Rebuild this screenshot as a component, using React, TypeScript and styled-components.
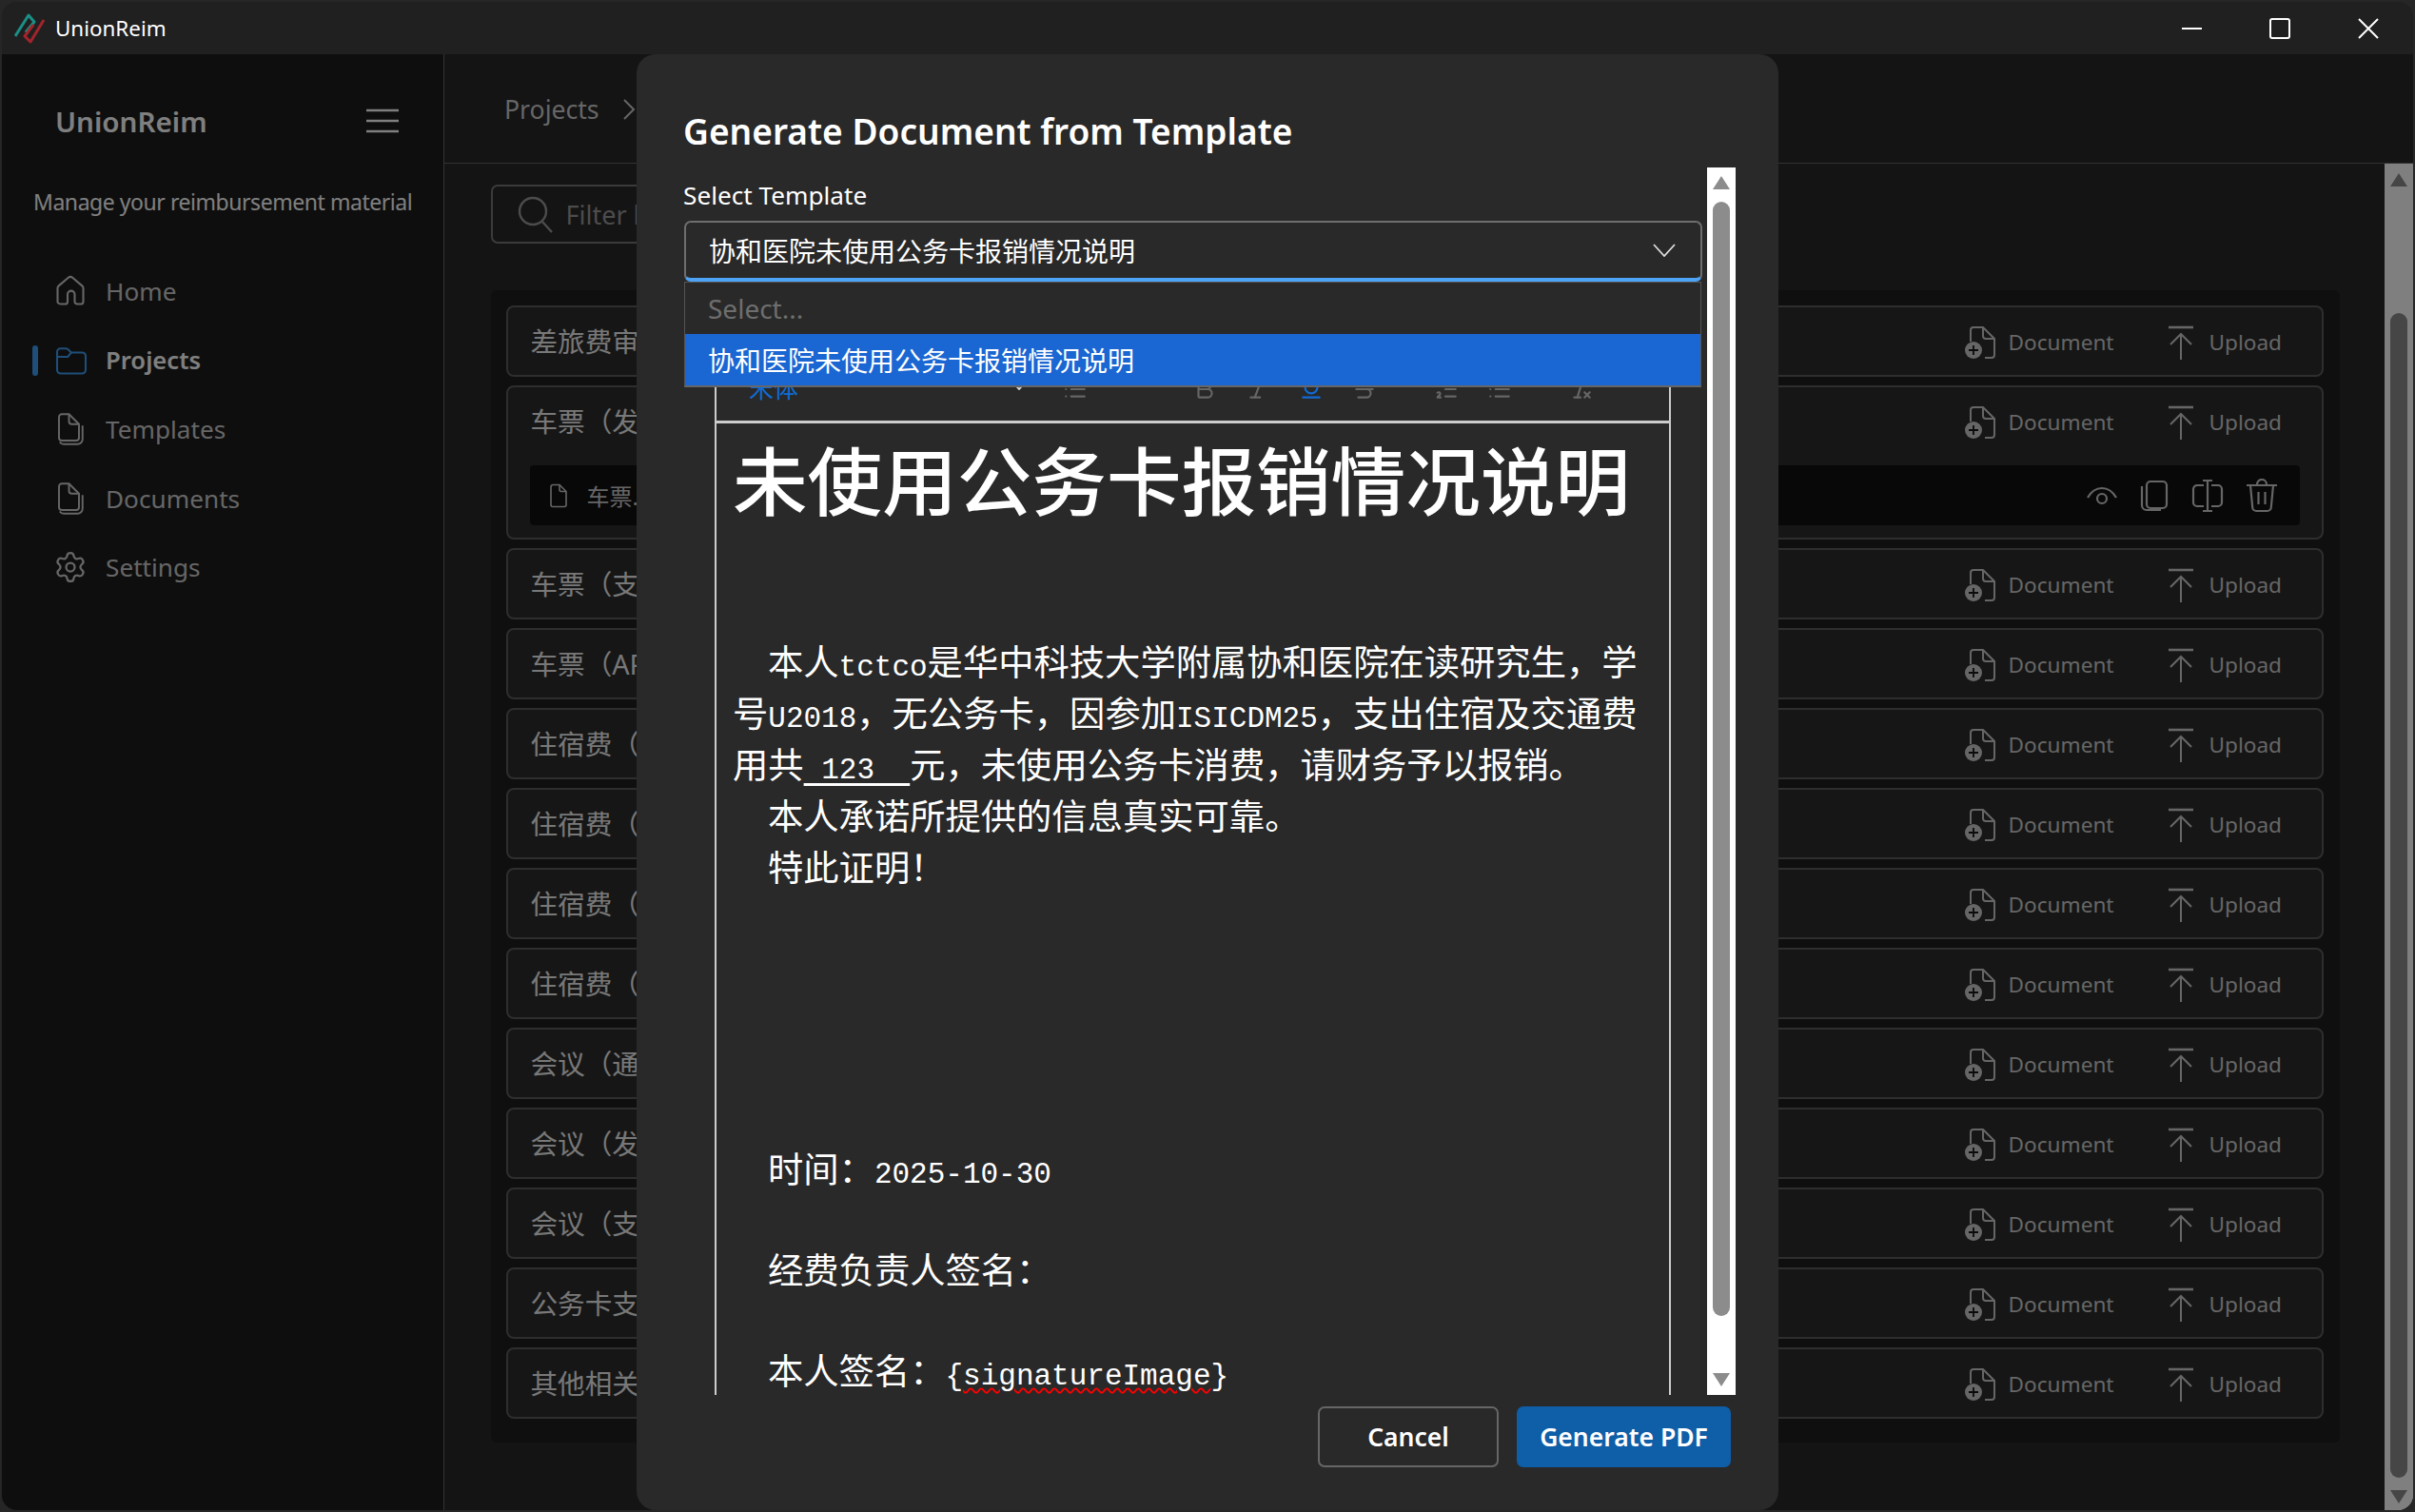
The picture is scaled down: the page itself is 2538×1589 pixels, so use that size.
import React from "react";
import styled, { createGlobalStyle } from "styled-components";
import { Bold, Italic, List, ListOrdered, RemoveFormatting, Settings, Strikethrough, Underline } from "lucide-react";

const SANS = `"Noto Sans", "Noto Sans CJK SC", sans-serif`;

const GlobalStyle = createGlobalStyle`
  html, body {
    margin: 0;
    height: 100%;
    background: #262626;
    overflow: hidden;
  }
  * {
    box-sizing: border-box;
  }
`;

const Page = styled.div`
  width: 2538px;
  height: 1589px;
  padding: 2px;
  font-family: ${SANS};
`;

const AppWindow = styled.div`
  display: flex;
  flex-direction: column;
  height: 100%;
  border-radius: 16px;
  overflow: hidden;
  background: #202020;
`;

const TitleBar = styled.div`
  display: flex;
  align-items: center;
  flex: 0 0 55px;
  padding-left: 13px;
  background: #202020;
  color: #fff;
`;

const AppName = styled.span`
  margin-left: 11px;
  font-size: 22.4px;
`;

const WindowControls = styled.div`
  display: flex;
  align-items: center;
  margin-left: auto;
  margin-right: 36px;
  gap: 71px;
`;

const Content = styled.div`
  position: relative;
  display: flex;
  flex: 1;
  min-height: 0;
`;

const Sidebar = styled.aside`
  flex: 0 0 465px;
  background: #1c1c1c;
  border-right: 1px solid #666;
  color: #fff;
`;

const Brand = styled.div`
  display: flex;
  align-items: center;
  justify-content: space-between;
  height: 58px;
  margin-top: 41px;
  padding: 0 47px 0 56px;
  font-size: 29.6px;
  font-weight: 600;
`;

const Tagline = styled.div`
  height: 40px;
  margin-top: 36px;
  padding-left: 33px;
  font-size: 23px;
  letter-spacing: -0.45px;
  line-height: 40px;
  white-space: nowrap;
`;

const Nav = styled.nav`
  margin-top: 38px;
  padding-left: 32px;
`;

const NavItem = styled.div<{ $active?: boolean }>`
  display: flex;
  align-items: center;
  height: 72.5px;
  font-size: ${(p) => (p.$active ? 25.6 : 26.2)}px;
  font-weight: ${(p) => (p.$active ? 600 : 400)};
  color: ${(p) => (p.$active ? "#fff" : "#ccc")};
`;

const NavMark = styled.span<{ $active?: boolean }>`
  flex: 0 0 6px;
  height: 32px;
  margin-right: 19px;
  border-radius: 3px;
  background: ${(p) => (p.$active ? "#3e9cf0" : "transparent")};
`;

const NavIcon = styled.span<{ $active?: boolean }>`
  display: flex;
  flex: 0 0 34px;
  margin-right: ${(p) => (p.$active ? 17 : 19)}px;
  margin-left: -3px;
  color: ${(p) => (p.$active ? "#3e9cf0" : "#ccc")};
`;

const Main = styled.main`
  display: flex;
  flex: 1;
  flex-direction: column;
  min-width: 0;
  background: #282828;
  color: #ccc;
`;

const Header = styled.header`
  display: flex;
  align-items: center;
  flex: 0 0 115px;
  padding: 2px 0 0 63px;
  border-bottom: 1px solid #666;
  font-size: 26.6px;
  gap: 24px;
`;

const MainBody = styled.div`
  display: flex;
  flex: 1;
  min-height: 0;
`;

const MainScroll = styled.div`
  flex: 1;
  min-width: 0;
  padding: 22px 47px 0 48.5px;
`;

const SearchBox = styled.div`
  display: flex;
  align-items: center;
  width: 560px;
  height: 62px;
  padding-left: 26px;
  gap: 13px;
  border: 2px solid #777;
  border-radius: 7px;
  font-size: 27px;
  color: #999;
`;

const ListPanel = styled.div`
  display: flex;
  flex-direction: column;
  margin-top: 49px;
  padding: 16px 17px 25px 16px;
  gap: 9px;
  background: #1e1e1e;
  border-radius: 6px;
`;

const Row = styled.div`
  border: 2px solid #5c5c5c;
  border-radius: 8px;
  background: #2c2c2c;
`;

const RowHead = styled.div`
  display: flex;
  align-items: center;
  justify-content: space-between;
  height: 71px;
  padding: 0 42px 0 24px;
`;

const RowLabel = styled.span`
  margin-top: -2px;
  font-size: 28.6px;
  color: #f0f0f0;
`;

const RowActions = styled.div`
  display: flex;
  align-items: center;
  margin-top: 2px;
  gap: 57px;
`;

const RowAction = styled.span<{ $gap: number }>`
  display: flex;
  align-items: center;
  gap: ${(p) => p.$gap}px;
  font-size: 22.6px;
`;

const FileRow = styled.div`
  display: flex;
  align-items: center;
  justify-content: space-between;
  height: 63px;
  margin: 11px 23px 13px;
  padding: 0 24px 0 20px;
  border-radius: 4px;
  background: #101010;
`;

const FileName = styled.span`
  display: flex;
  align-items: center;
  gap: 20px;
  font-size: 24px;
`;

const FileTools = styled.div`
  display: flex;
  align-items: center;
  gap: 24px;
`;

const ScrollBar = styled.div<{ $top: number; $bottom: number }>`
  display: flex;
  flex: 0 0 30px;
  flex-direction: column;
  align-items: center;
  padding: ${(p) => p.$top}px 0 ${(p) => p.$bottom}px;
  background: #fff;
`;

const ArrowUp = styled.span`
  flex: none;
  border-left: 9px solid transparent;
  border-right: 9px solid transparent;
  border-bottom: 14px solid #8c8c8c;
`;

const ArrowDown = styled.span`
  flex: none;
  border-left: 9px solid transparent;
  border-right: 9px solid transparent;
  border-top: 14px solid #8c8c8c;
`;

const Thumb = styled.span<{ $before: number; $after: number }>`
  flex: 1;
  width: 18px;
  margin: ${(p) => p.$before}px 0 ${(p) => p.$after}px;
  border-radius: 9px;
  background: #8c8c8c;
`;

const Backdrop = styled.div`
  position: absolute;
  inset: 0;
  display: flex;
  justify-content: center;
  background: rgba(0, 0, 0, 0.5);
`;

const Modal = styled.section`
  display: flex;
  flex-direction: column;
  width: 1200px;
  height: 100%;
  padding: 54px 50px 0 49px;
  border-radius: 20px;
  background: #292929;
  color: #fff;
`;

const ModalTitle = styled.h2`
  height: 54px;
  margin: 0 0 11px;
  font-size: 37.1px;
  font-weight: 600;
  line-height: 54px;
  white-space: nowrap;
`;

const ModalBody = styled.div`
  display: flex;
  height: 1290px;
  margin-right: -5px;
`;

const ModalScroll = styled.div`
  flex: 1;
  min-width: 0;
  overflow: hidden;
  padding: 10px 5px 0 1px;
`;

const FieldLabel = styled.div`
  height: 38px;
  margin: 0 0 8px -1px;
  font-size: 26.2px;
  line-height: 38px;
`;

const SelectWrap = styled.div`
  position: relative;
  z-index: 2;
`;

const SelectBox = styled.div`
  display: flex;
  align-items: center;
  justify-content: space-between;
  height: 64px;
  padding: 0 26px 0 24px;
  border: 2px solid #6e6e6e;
  border-bottom: 4px solid #4da3f5;
  border-radius: 7px;
  font-size: 28px;
`;

const Dropdown = styled.div`
  position: absolute;
  top: 100%;
  left: 0;
  right: 1px;
  border: 1px solid #555;
  border-bottom: 2px solid #666;
  background: #292929;
  font-size: 28px;
`;

const DropdownOption = styled.div<{ $selected?: boolean }>`
  display: flex;
  align-items: center;
  height: 54px;
  padding-left: 24px;
  background: ${(p) => (p.$selected ? "#1a66d2" : "transparent")};
  color: ${(p) => (p.$selected ? "#fff" : "#6e6e6e")};
`;

const Editor = styled.div`
  width: 1005px;
  margin: 79px 0 0 32px;
  border: 1px solid #ccc;
  border-width: 0 2px;
`;

const Toolbar = styled.div`
  display: flex;
  align-items: flex-start;
  height: 70px;
  padding: 21px 0 0 34px;
  border-bottom: 3px solid #ccc;
  color: #666;
`;

const FontName = styled.span`
  width: 272px;
  margin-top: -8px;
  font-size: 26px;
  color: #0f6cd5;
`;

const ToolGroup = styled.div<{ $gap: number; $left: number }>`
  display: flex;
  gap: ${(p) => p.$gap}px;
  margin-left: ${(p) => p.$left}px;
`;

const ToolButton = styled.span<{ $active?: boolean }>`
  display: flex;
  color: ${(p) => (p.$active ? "#0f6cd5" : "inherit")};
`;

const EditorPage = styled.div`
  padding: 2px 18px 0 17px;
  font-family: "Noto Sans CJK SC", sans-serif;
  font-size: 37.3px;
  line-height: 53.9px;
  white-space: nowrap;
`;

const DocTitle = styled.h1`
  height: 110px;
  margin: 0 0 111px;
  font-size: 78.6px;
  font-weight: 500;
  line-height: 110px;
`;

const DocLine = styled.p<{ $indent?: boolean; $after?: number }>`
  height: 53.9px;
  margin: 0 0 ${(p) => p.$after ?? 0}px;
  padding-left: ${(p) => (p.$indent ? 37 : 0)}px;
`;

const Latin = styled.span`
  font-family: "Liberation Mono", monospace;
  font-size: 31px;
  line-height: 1;
`;

const Filled = styled.span`
  text-decoration: underline;
  text-underline-offset: 5px;
`;

const Misspelt = styled.span`
  text-decoration: underline wavy #f00 2px;
  text-underline-offset: 3px;
`;

const ModalFooter = styled.div`
  display: flex;
  justify-content: flex-end;
  margin-top: 12px;
  gap: 19px;
`;

const ModalButton = styled.button<{ $primary?: boolean }>`
  width: ${(p) => (p.$primary ? 225 : 190)}px;
  height: 64px;
  padding: 0;
  border: 2px solid ${(p) => (p.$primary ? "#0f5ea8" : "#666")};
  border-radius: 7px;
  background: ${(p) => (p.$primary ? "#0f5ea8" : "transparent")};
  color: #fff;
  font-family: ${SANS};
  font-size: 26.5px;
  font-weight: 600;
`;

const Logo = () => (
  <svg width="32" height="32" viewBox="0 0 32 32" fill="none" strokeWidth="3" strokeLinejoin="round">
    <polyline points="1,24 15,2 21,9 12,20" stroke="#1b8f86" />
    <polyline points="31,7 17,30 11,24 20,12" stroke="#a3242c" />
  </svg>
);

const Minimize = () => (
  <svg width="21" height="22" viewBox="0 0 21 22" stroke="#fff" strokeWidth="2"><path d="M0 11h21" /></svg>
);

const Maximize = () => (
  <svg width="22" height="22" viewBox="0 0 22 22" fill="none" stroke="#fff" strokeWidth="2"><rect x="1" y="1" width="20" height="20" rx="2" /></svg>
);

const CloseIcon = () => (
  <svg width="22" height="22" viewBox="0 0 22 22" stroke="#fff" strokeWidth="2"><path d="M1 1l20 20M21 1L1 21" /></svg>
);

const Hamburger = () => (
  <svg width="34" height="26" viewBox="0 0 34 26" stroke="currentColor" strokeWidth="2.4"><path d="M0 2h34M0 13h34M0 24h34" /></svg>
);

const HomeIcon = () => (
  <svg width="36" height="36" viewBox="0 0 24 24" fill="none" stroke="currentColor" strokeWidth="1.4">
    <path d="M10.55 2.53a2.25 2.25 0 0 1 2.9 0l6.75 5.7c.5.42.8 1.05.8 1.71v9.31c0 .97-.78 1.75-1.75 1.75h-2.5c-.97 0-1.75-.78-1.75-1.75v-5a2.5 2.5 0 0 0-5 0v5c0 .97-.78 1.75-1.75 1.75h-2.5C3.78 21 3 20.22 3 19.25V9.94c0-.66.3-1.29.8-1.71l6.75-5.7Z" />
  </svg>
);

const FolderIcon = () => (
  <svg width="38" height="36" viewBox="0 0 24 24" fill="none" stroke="currentColor" strokeWidth="1.4">
    <path d="M2 6a2.5 2.5 0 0 1 2.5-2.5h3.6c.5 0 1 .2 1.4.5L12 6.3h7.5A2.5 2.5 0 0 1 22 8.8v9.7a2.5 2.5 0 0 1-2.5 2.5h-15A2.5 2.5 0 0 1 2 18.5Z" />
    <path d="M2 9.3h7.5L12 6.3" />
  </svg>
);

const DocStackIcon = () => (
  <svg width="36" height="38" viewBox="0 0 24 24" fill="none" stroke="currentColor" strokeWidth="1.3">
    <path d="M4 3.5A2 2 0 0 1 6 1.5h5l7 7v9.5a2 2 0 0 1-2 2H6a2 2 0 0 1-2-2Z" />
    <path d="M11 1.5v5a2 2 0 0 0 2 2h5" />
    <path d="M20.5 9.5v9.5a3.5 3.5 0 0 1-3.5 3.5H7.5A3.5 3.5 0 0 1 4.5 21" />
  </svg>
);

const FileIcon = () => (
  <svg width="20" height="26" viewBox="0 0 20 26" fill="none" stroke="currentColor" strokeWidth="1.6">
    <path d="M2 3.5A2 2 0 0 1 4 1.5h7l7 7v14a2 2 0 0 1-2 2H4a2 2 0 0 1-2-2Z" />
    <path d="M11 1.5v5a2 2 0 0 0 2 2h5" />
  </svg>
);

const SearchIcon = () => (
  <svg width="38" height="40" viewBox="0 0 38 40" fill="none" stroke="currentColor" strokeWidth="2.4">
    <circle cx="16" cy="17" r="14" /><path d="M26 28l10 11" />
  </svg>
);

const DocAddIcon = () => (
  <svg width="34" height="36" viewBox="0 0 34 36" fill="none" stroke="currentColor" strokeWidth="2">
    <path d="M6 17V5a3 3 0 0 1 3-3h10l12 12v17a3 3 0 0 1-3 3h-7" />
    <path d="M19 2v9a3 3 0 0 0 3 3h9" />
    <circle cx="9" cy="26" r="9" fill="currentColor" stroke="none" />
    <path d="M9 21v10M4 26h10" stroke="#161616" strokeWidth="1.8" />
  </svg>
);

const UploadIcon = () => (
  <svg width="26" height="36" viewBox="0 0 26 36" fill="none" stroke="currentColor" strokeWidth="2">
    <path d="M0 2h26" strokeWidth="2.6" />
    <path d="M13 36V9M2 20L13 9l11 11" />
  </svg>
);

const EyeIcon = () => (
  <svg width="32" height="26" viewBox="0 0 32 26" fill="none" stroke="currentColor" strokeWidth="2.2">
    <path d="M1 15C5 8 10 5 16 5s11 3 15 10" />
    <circle cx="16" cy="16" r="5" />
  </svg>
);

const CopyIcon = () => (
  <svg width="30" height="34" viewBox="0 0 30 34" fill="none" stroke="currentColor" strokeWidth="2.2">
    <rect x="7" y="2" width="21" height="28" rx="4" />
    <path d="M2 7v20a5 5 0 0 0 5 5h15" />
  </svg>
);

const SplitIcon = () => (
  <svg width="34" height="36" viewBox="0 0 34 36" fill="none" stroke="currentColor" strokeWidth="2.2">
    <path d="M13 7H6a4 4 0 0 0-4 4v14a4 4 0 0 0 4 4h7M21 7h7a4 4 0 0 1 4 4v14a4 4 0 0 1-4 4h-7" />
    <path d="M17 2v32M12 2h10M12 34h10" />
  </svg>
);

const TrashIcon = () => (
  <svg width="32" height="36" viewBox="0 0 32 36" fill="none" stroke="currentColor" strokeWidth="2.2">
    <path d="M0 7h32M11 7V6a5 5 0 0 1 10 0v1" />
    <path d="M4 7l2.2 23a4 4 0 0 0 4 4h11.6a4 4 0 0 0 4-4L28 7" />
    <path d="M12.5 14v13M19.5 14v13" />
  </svg>
);

const Chevron = () => (
  <svg width="24" height="14" viewBox="0 0 24 14" fill="none" stroke="#ddd" strokeWidth="1.8"><path d="M1 1l11 12L23 1" /></svg>
);

const BreadcrumbChevron = () => (
  <svg width="14" height="22" viewBox="0 0 14 22" fill="none" stroke="currentColor" strokeWidth="2"><path d="M2 1l10 10L2 21" /></svg>
);

const ROW_LABELS = [
  "差旅费审批单",
  "车票（发票）",
  "车票（支付记录）",
  "车票（APP截图）",
  "住宿费（发票）",
  "住宿费（水单）",
  "住宿费（支付）",
  "住宿费（其他）",
  "会议（通知）",
  "会议（发票）",
  "会议（支付）",
  "公务卡支出",
  "其他相关材料",
];

const NAV_ITEMS = [
  { label: "Home", icon: <HomeIcon /> },
  { label: "Projects", icon: <FolderIcon />, active: true },
  { label: "Templates", icon: <DocStackIcon /> },
  { label: "Documents", icon: <DocStackIcon /> },
  { label: "Settings", icon: <Settings size={36} strokeWidth={1.5} /> },
];

const TEMPLATE_NAME = "协和医院未使用公务卡报销情况说明";

export default function App() {
  return (
    <Page>
      <GlobalStyle />
      <AppWindow>
        <TitleBar>
          <Logo />
          <AppName>UnionReim</AppName>
          <WindowControls>
            <Minimize />
            <Maximize />
            <CloseIcon />
          </WindowControls>
        </TitleBar>
        <Content>
          <Sidebar>
            <Brand>
              UnionReim
              <Hamburger />
            </Brand>
            <Tagline>Manage your reimbursement material</Tagline>
            <Nav>
              {NAV_ITEMS.map((item) => (
                <NavItem key={item.label} $active={item.active}>
                  <NavMark $active={item.active} />
                  <NavIcon $active={item.active}>{item.icon}</NavIcon>
                  {item.label}
                </NavItem>
              ))}
            </Nav>
          </Sidebar>
          <Main>
            <Header>
              Projects
              <BreadcrumbChevron />
            </Header>
            <MainBody>
              <MainScroll>
                <SearchBox>
                  <SearchIcon />
                  Filter by name
                </SearchBox>
                <ListPanel>
                  {ROW_LABELS.map((label, i) => (
                    <Row key={label}>
                      <RowHead>
                        <RowLabel>{label}</RowLabel>
                        <RowActions>
                          <RowAction $gap={12}><DocAddIcon />Document</RowAction>
                          <RowAction $gap={17}><UploadIcon />Upload</RowAction>
                        </RowActions>
                      </RowHead>
                      {i === 1 && (
                        <FileRow>
                          <FileName><FileIcon />车票.pdf</FileName>
                          <FileTools>
                            <EyeIcon />
                            <CopyIcon />
                            <SplitIcon />
                            <TrashIcon />
                          </FileTools>
                        </FileRow>
                      )}
                    </Row>
                  ))}
                </ListPanel>
              </MainScroll>
              <ScrollBar $top={10} $bottom={7}>
                <ArrowUp />
                <Thumb $before={133} $after={13} />
                <ArrowDown />
              </ScrollBar>
            </MainBody>
          </Main>
          <Backdrop>
            <Modal>
              <ModalTitle>Generate Document from Template</ModalTitle>
              <ModalBody>
                <ModalScroll>
                  <FieldLabel>Select Template</FieldLabel>
                  <SelectWrap>
                    <SelectBox>
                      {TEMPLATE_NAME}
                      <Chevron />
                    </SelectBox>
                    <Dropdown>
                      <DropdownOption>Select...</DropdownOption>
                      <DropdownOption $selected>{TEMPLATE_NAME}</DropdownOption>
                    </Dropdown>
                  </SelectWrap>
                  <Editor>
                    <Toolbar>
                      <FontName>宋体</FontName>
                      <ToolGroup $gap={34} $left={0}>
                        <ToolButton $active><Chevron /></ToolButton>
                        <ToolButton><List size={26} /></ToolButton>
                      </ToolGroup>
                      <ToolGroup $gap={30} $left={110}>
                        <ToolButton><Bold size={26} /></ToolButton>
                        <ToolButton><Italic size={26} /></ToolButton>
                        <ToolButton $active><Underline size={26} /></ToolButton>
                        <ToolButton><Strikethrough size={26} /></ToolButton>
                      </ToolGroup>
                      <ToolGroup $gap={30} $left={60}>
                        <ToolButton><ListOrdered size={26} /></ToolButton>
                        <ToolButton><List size={26} /></ToolButton>
                      </ToolGroup>
                      <ToolGroup $gap={0} $left={60}>
                        <ToolButton><RemoveFormatting size={26} /></ToolButton>
                      </ToolGroup>
                    </Toolbar>
                    <EditorPage>
                      <DocTitle>未使用公务卡报销情况说明</DocTitle>
                      <DocLine $indent>本人<Latin>tctco</Latin>是华中科技大学附属协和医院在读研究生，学</DocLine>
                      <DocLine>号<Latin>U2018</Latin>，无公务卡，因参加<Latin>ISICDM25</Latin>，支出住宿及交通费</DocLine>
                      <DocLine>用共<Filled><Latin>&nbsp;123&nbsp;&nbsp;</Latin></Filled>元，未使用公务卡消费，请财务予以报销。</DocLine>
                      <DocLine $indent>本人承诺所提供的信息真实可靠。</DocLine>
                      <DocLine $indent $after={264}>特此证明！</DocLine>
                      <DocLine $indent $after={52}>时间：<Latin>2025-10-30</Latin></DocLine>
                      <DocLine $indent $after={52}>经费负责人签名：</DocLine>
                      <DocLine $indent>本人签名：<Latin>{"{"}<Misspelt>signatureImage</Misspelt>{"}"}</Latin></DocLine>
                    </EditorPage>
                  </Editor>
                </ModalScroll>
                <ScrollBar $top={9} $bottom={9}>
                  <ArrowUp />
                  <Thumb $before={13} $after={60} />
                  <ArrowDown />
                </ScrollBar>
              </ModalBody>
              <ModalFooter>
                <ModalButton>Cancel</ModalButton>
                <ModalButton $primary>Generate PDF</ModalButton>
              </ModalFooter>
            </Modal>
          </Backdrop>
        </Content>
      </AppWindow>
    </Page>
  );
}
